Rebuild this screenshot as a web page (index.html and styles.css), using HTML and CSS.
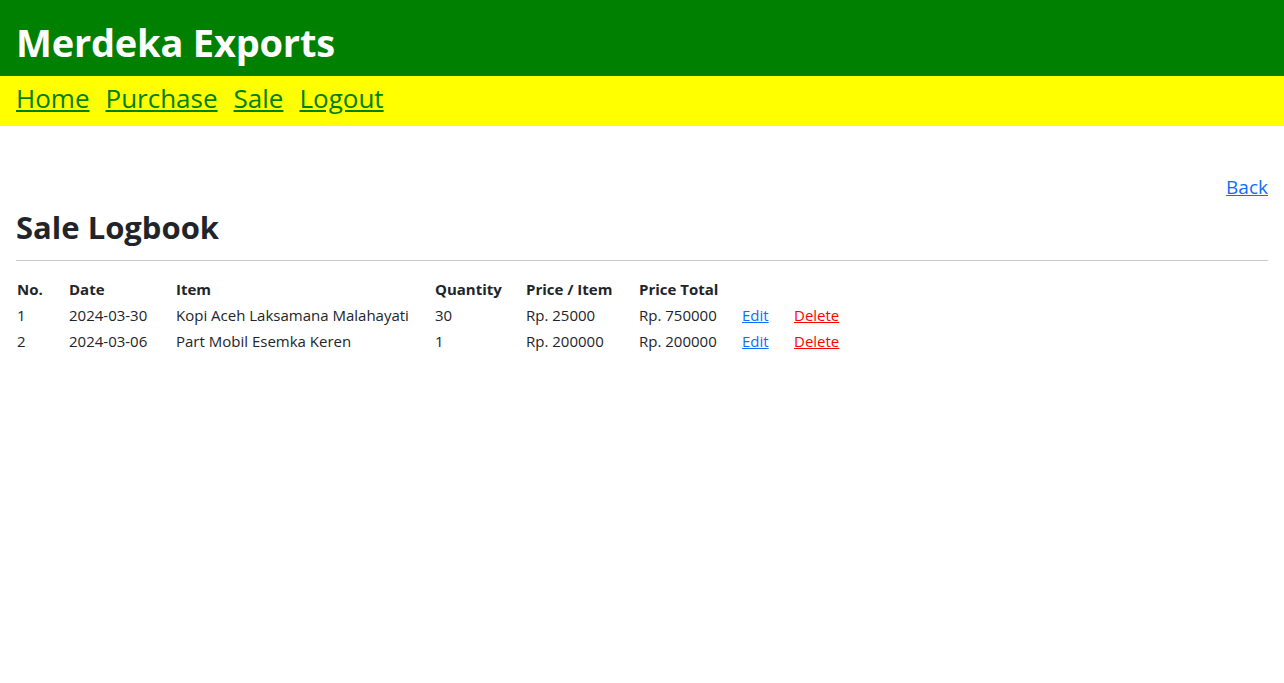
FILE: index.html
```html
<!DOCTYPE html>
<html lang="en">
<head>
<meta charset="utf-8">
<title>Sale Logbook - Merdeka Exports</title>
<link rel="stylesheet" href="styles.css">
</head>
<body>
<header class="site-header">
  <h1 class="brand">Merdeka Exports</h1>
</header>
<nav class="site-nav">
  <a href="#">Home</a>
  <a href="#">Purchase</a>
  <a href="#">Sale</a>
  <a href="#">Logout</a>
</nav>
<main class="content">
  <div class="back-row"><a href="#" class="back-link">Back</a></div>
  <h2 class="page-title">Sale Logbook</h2>
  <hr class="divider">
  <table class="log-table">
    <colgroup>
      <col class="c-no"><col class="c-date"><col class="c-item"><col class="c-qty"><col class="c-price"><col class="c-total"><col class="c-edit"><col class="c-del">
    </colgroup>
    <thead>
      <tr><th>No.</th><th>Date</th><th>Item</th><th>Quantity</th><th>Price / Item</th><th>Price Total</th><th></th><th></th></tr>
    </thead>
    <tbody>
      <tr><td>1</td><td>2024-03-30</td><td>Kopi Aceh Laksamana Malahayati</td><td>30</td><td>Rp. 25000</td><td>Rp. 750000</td><td><a href="#" class="edit-link">Edit</a></td><td><a href="#" class="delete-link">Delete</a></td></tr>
      <tr><td>2</td><td>2024-03-06</td><td>Part Mobil Esemka Keren</td><td>1</td><td>Rp. 200000</td><td>Rp. 200000</td><td><a href="#" class="edit-link">Edit</a></td><td><a href="#" class="delete-link">Delete</a></td></tr>
    </tbody>
  </table>
</main>
</body>
</html>
```
FILE: styles.css
```css
* { box-sizing: border-box; }
body {
  margin: 0;
  font-family: "Open Sans", "Noto Sans", sans-serif;
  color: #212529;
  background: #fff;
}
.site-header {
  background: #008000;
  height: 76px;
  padding: 9px 16px 0;
  display: flex;
  align-items: center;
}
.brand {
  margin: 0;
  color: #fff;
  font-size: 38px;
  font-weight: 700;
  line-height: 1.2;
  letter-spacing: -0.2px;
}
.site-nav {
  background: #ffff00;
  height: 50px;
  padding: 0 16px 5px;
  display: flex;
  align-items: center;
  gap: 16px;
}
.site-nav a {
  color: #008000;
  font-size: 26px;
  line-height: 1.2;
  text-decoration: underline;
}
.content {
  padding: 46px 16px 0;
}
.back-row {
  display: flex;
  justify-content: flex-end;
  line-height: 30px;
}
.back-link {
  color: #0d6efd;
  font-size: 19px;
}
.page-title {
  margin: 6px 0 0;
  font-size: 31px;
  font-weight: 700;
  line-height: 38px;
}
.divider {
  margin: 14px 0 15px;
  border: 0;
  border-top: 1px solid #c8c8c8;
}
.log-table {
  border-collapse: collapse;
  table-layout: fixed;
  font-size: 15px;
}
.log-table th, .log-table td {
  padding: 0 0 0 1px;
  height: 26px;
  text-align: left;
  white-space: nowrap;
}
.log-table th { font-weight: 700; }
.c-no { width: 52px; }
.c-date { width: 107px; }
.c-item { width: 259px; }
.c-qty { width: 91px; }
.c-price { width: 113px; }
.c-total { width: 103px; }
.c-edit { width: 52px; }
.c-del { width: 60px; }
.edit-link { color: #0d6efd; }
.delete-link { color: #ff0000; }
```
